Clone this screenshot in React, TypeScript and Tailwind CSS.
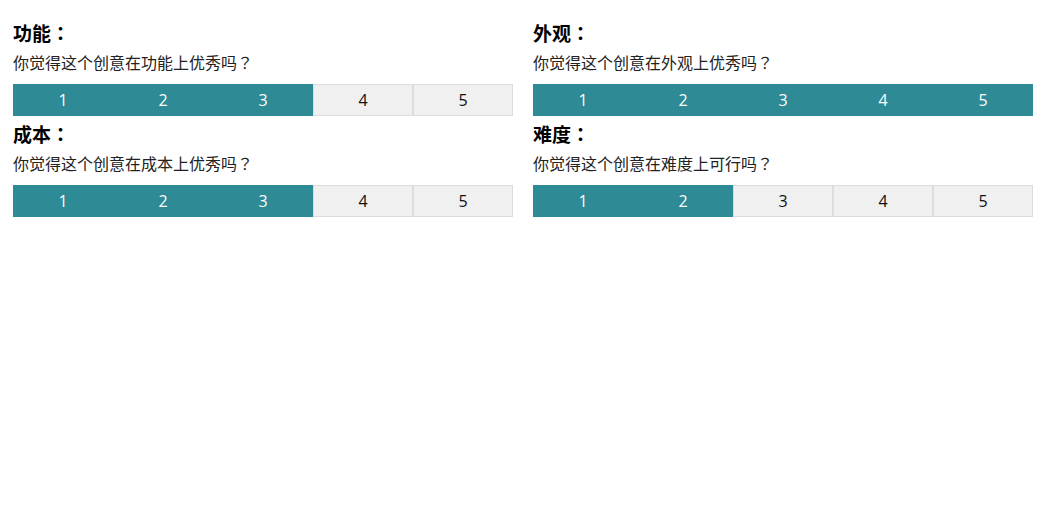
const sections = [
  { title: '功能', question: '你觉得这个创意在功能上优秀吗', score: 3 },
  { title: '外观', question: '你觉得这个创意在外观上优秀吗', score: 5 },
  { title: '成本', question: '你觉得这个创意在成本上优秀吗', score: 3 },
  { title: '难度', question: '你觉得这个创意在难度上可行吗', score: 2 },
];

function RatingBar({ score }: { score: number }) {
  return (
    <div className="mt-[11px] flex h-[32px] w-[500px]">
      {[1, 2, 3, 4, 5].map((n) =>
        n <= score ? (
          <div key={n} className="flex h-full w-[100px] items-center justify-center bg-[#2e8a94] text-[16px] text-white">
            {n}
          </div>
        ) : (
          <div
            key={n}
            className="flex h-full w-[100px] items-center justify-center border border-[#dcdcdc] bg-[#f0f0f0] text-[16px] text-[#111]"
          >
            {n}
          </div>
        )
      )}
    </div>
  );
}

export default function App() {
  return (
    <div className="min-h-[510px] bg-white pl-[13px] pt-[20px] font-['Open_Sans','Noto_Sans_CJK_SC',sans-serif]">
      <div className="grid w-[1020px] grid-cols-[500px_500px] gap-x-[20px]">
        {sections.map((s) => (
          <div key={s.title} className="h-[101px]">
            <h2 className="font-['Noto_Sans_CJK_SC','Open_Sans',sans-serif] text-[19px] font-bold leading-[26px] text-black">
              {s.title}
              {/* TC font centres full-width punctuation like the reference */}
              <span className="font-['Noto_Sans_CJK_TC','Noto_Sans_CJK_SC',sans-serif]">：</span>
            </h2>
            <p className="mt-[5px] font-['Noto_Sans_CJK_SC','Open_Sans',sans-serif] text-[16px] leading-[22px] text-[#222]">
              {s.question}
              <span className="font-['Noto_Sans_CJK_TC','Noto_Sans_CJK_SC',sans-serif]">？</span>
            </p>
            <RatingBar score={s.score} />
          </div>
        ))}
      </div>
    </div>
  );
}
